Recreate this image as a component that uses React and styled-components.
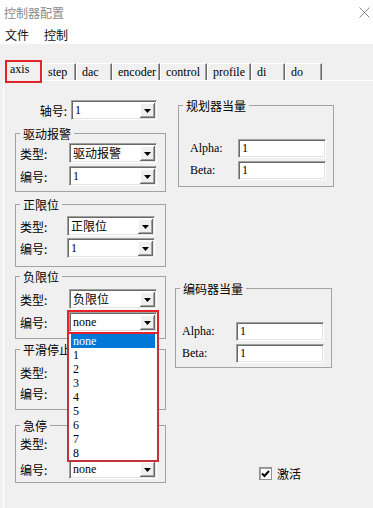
import styled, { createGlobalStyle } from "styled-components";

const CJK = `"Noto Sans CJK SC", "Noto Sans", sans-serif`;
const SERIF = `"Liberation Serif", "DejaVu Serif", serif`;

const GlobalStyle = createGlobalStyle`
    html, body {
        margin: 0;
        padding: 0;
    }
    body {
        width: 373px;
        height: 508px;
        overflow: hidden;
        background: #f0f0f0;
        font-family: ${CJK};
        font-size: 12px;
        color: #000;
    }
    * {
        box-sizing: border-box;
    }
`;

const Window = styled.div`
    width: 373px;
    height: 508px;
    display: flex;
    flex-direction: column;
    overflow: hidden;
`;

const TitleBar = styled.div`
    flex: none;
    height: 24px;
    display: flex;
    align-items: center;
    justify-content: space-between;
    padding: 0 3px 0 4px;
    background: #fff;
    color: #8a8a8a;
    font-size: 12px;
`;

const MenuBar = styled.div`
    flex: none;
    height: 20px;
    display: flex;
    align-items: center;
    gap: 15px;
    padding-left: 5px;
    background: #fff;
    color: #111;
    font-size: 12px;
`;

const TabStrip = styled.div`
    flex: none;
    height: 20px;
    margin-top: 16px;
    padding-left: 5px;
    display: flex;
    align-items: flex-start;
    position: relative;
    z-index: 1;
`;

const Tab = styled.div`
    flex: none;
    width: ${p => p.$w}px;
    height: ${p => (p.$active ? 23 : 17)}px;
    margin-top: ${p => (p.$active ? 0 : 3)}px;
    padding: ${p => (p.$active ? "1px 0 0 3px" : "2px 0 0 5px")};
    font-family: ${SERIF};
    font-size: 12px;
    line-height: 13px;
    background: #f0f0f0;
    border-top: 1px solid #fff;
    border-left: 1px solid #fff;
    border-right: 1px solid #696969;
    box-shadow: inset -1px 0 0 #a0a0a0;
    ${p => p.$active && `
        border: 2px solid #e3242b;
        box-shadow: none;
    `}
`;

const Panel = styled.div`
    flex: 1;
    display: flex;
    align-items: flex-start;
    margin-left: 3px;
    padding-left: 11px;
    border-top: 1px solid #fff;
    border-left: 1px solid #fff;
`;

const LeftColumn = styled.div`
    width: 151px;
    flex: none;
    display: flex;
    flex-direction: column;
`;

const RightColumn = styled.div`
    flex: none;
    margin-left: 9px;
    display: flex;
    flex-direction: column;
    align-items: flex-start;
`;

const AxisRow = styled.div`
    display: flex;
    align-items: center;
    height: 20px;
    margin-top: 19px;
`;

const AxisLabel = styled.span`
    width: 52px;
    margin-right: 4px;
    text-align: right;
    font-size: 12px;
`;

const Group = styled.fieldset`
    margin: ${p => p.$mt}px 0 0 ${p => p.$ml || 0}px;
    width: ${p => p.$w}px;
    min-width: 0;
    padding: ${p => p.$pt}px 0 ${p => p.$pb}px 4px;
    border: 1px solid #a3a3a3;
    --lw: ${p => p.$lw}px;
    --indent: ${p => p.$indent || 0}px;
`;

const Legend = styled.legend`
    padding: 0 3px;
    font-size: 12px;
    line-height: 15px;
`;

const Rows = styled.div`
    display: flex;
    flex-direction: column;
    gap: ${p => p.$gap}px;
`;

const Row = styled.div`
    display: flex;
    align-items: center;
    height: ${p => p.$h || 20}px;
    padding-left: var(--indent);
`;

const Label = styled.span`
    flex: none;
    width: var(--lw);
    font-family: ${p => (p.$serif ? SERIF : CJK)};
    font-size: 12px;
    white-space: nowrap;
`;

const SelectBox = styled.div`
    position: relative;
    flex: none;
    width: ${p => p.$w || 88}px;
    height: 20px;
    display: flex;
    padding: 1px 1px 1px 3px;
    background: #fff;
    border: 1px solid;
    border-color: #a0a0a0 #fff #fff #a0a0a0;
    box-shadow: inset 1px 1px 0 #696969, inset -1px -1px 0 #e3e3e3;
    ${p => p.$framed && `outline: 2px solid #e8222a;`}
`;

const SelectValue = styled.span`
    flex: 1;
    align-self: center;
    font-family: ${p => (p.$serif ? SERIF : CJK)};
    font-size: 12px;
    line-height: 16px;
    white-space: nowrap;
`;

const ArrowButton = styled.span`
    flex: none;
    width: 15px;
    margin-top: 1px;
    display: flex;
    align-items: center;
    justify-content: center;
    background: #f0f0f0;
    box-shadow: inset -1px -1px 0 #696969, inset 1px 1px 0 #fff, inset -2px -2px 0 #a0a0a0;
`;

const DropList = styled.ul`
    position: absolute;
    top: 21px;
    left: -3px;
    width: 92px;
    margin: 0;
    padding: 0 2px;
    list-style: none;
    background: #fff;
    border: 2px solid #c2323c;
    border-top: none;
    z-index: 10;
`;

const DropItem = styled.li`
    height: 14px;
    line-height: 14px;
    padding-left: 2px;
    font-family: ${SERIF};
    font-size: 12px;
    background: ${p => (p.$selected ? "#0078d7" : "transparent")};
    color: ${p => (p.$selected ? "#fff" : "#000")};
`;

const TextInput = styled.input`
    flex: none;
    width: 88px;
    height: 19px;
    margin: 0;
    padding: 0 0 0 3px;
    background: #fff;
    border: 1px solid;
    border-color: #a0a0a0 #fff #fff #a0a0a0;
    box-shadow: inset 1px 1px 0 #696969, inset -1px -1px 0 #e3e3e3;
    font-family: ${SERIF};
    font-size: 12px;
    color: #000;
    outline: none;
`;

const CheckRow = styled.label`
    display: flex;
    align-items: center;
    gap: 5px;
    margin: 97px 0 0 84px;
    font-size: 12px;
`;

const CheckBox = styled.span`
    width: 13px;
    height: 13px;
    display: flex;
    align-items: center;
    justify-content: center;
    background: #fff;
    border: 1px solid #8f8f8f;
    box-shadow: inset 1px 1px 0 #a0a0a0;
`;

const CloseIcon = () => (
    <svg width="11" height="11" viewBox="0 0 11 11">
        <path d="M0.5 0.5 L10.5 10.5 M10.5 0.5 L0.5 10.5" stroke="#8a8a8a" strokeWidth="1" fill="none" />
    </svg>
);

const Triangle = () => (
    <svg width="7" height="4" viewBox="0 0 7 4">
        <polygon points="0,0 7,0 3.5,4" fill="#000" />
    </svg>
);

const serifValue = v => /^[\w]+$/.test(v);

function Select({ value = "", width, framed, options }) {
    return (
        <SelectBox $w={width} $framed={framed}>
            <SelectValue $serif={serifValue(value)}>{value}</SelectValue>
            <ArrowButton><Triangle /></ArrowButton>
            {options && (
                <DropList>
                    {options.map(o => (
                        <DropItem key={o} $selected={o === value}>{o}</DropItem>
                    ))}
                </DropList>
            )}
        </SelectBox>
    );
}

const tabs = [
    { name: "axis", w: 37 },
    { name: "step", w: 34 },
    { name: "dac", w: 36 },
    { name: "encoder", w: 48 },
    { name: "control", w: 47 },
    { name: "profile", w: 44 },
    { name: "di", w: 34 },
    { name: "do", w: 37 },
];

const numberOptions = ["none", "1", "2", "3", "4", "5", "6", "7", "8"];

function App() {
    return (
        <Window>
            <GlobalStyle />
            <TitleBar>
                <span>控制器配置</span>
                <CloseIcon />
            </TitleBar>
            <MenuBar>
                <span>文件</span>
                <span>控制</span>
            </MenuBar>
            <TabStrip>
                {tabs.map((t, i) => (
                    <Tab key={t.name} $w={t.w} $active={i === 0}>{t.name}</Tab>
                ))}
            </TabStrip>
            <Panel>
                <LeftColumn>
                    <AxisRow>
                        <AxisLabel>轴号:</AxisLabel>
                        <Select value="1" width={86} />
                    </AxisRow>

                    <Group $mt={6} $pt={2} $pb={5} $lw={49}>
                        <Legend>驱动报警</Legend>
                        <Rows $gap={3}>
                            <Row><Label>类型:</Label><Select value="驱动报警" /></Row>
                            <Row><Label>编号:</Label><Select value="1" /></Row>
                        </Rows>
                    </Group>

                    <Group $mt={5} $pt={4} $pb={8} $lw={47}>
                        <Legend>正限位</Legend>
                        <Rows $gap={2}>
                            <Row><Label>类型:</Label><Select value="正限位" /></Row>
                            <Row><Label>编号:</Label><Select value="1" /></Row>
                        </Rows>
                    </Group>

                    <Group $mt={2} $pt={5} $pb={6} $lw={49}>
                        <Legend>负限位</Legend>
                        <Rows $gap={3}>
                            <Row><Label>类型:</Label><Select value="负限位" /></Row>
                            <Row>
                                <Label>编号:</Label>
                                <Select value="none" framed options={numberOptions} />
                            </Row>
                        </Rows>
                    </Group>

                    <Group $mt={3} $pt={5} $pb={6} $lw={49}>
                        <Legend>平滑停止</Legend>
                        <Rows $gap={1}>
                            <Row><Label>类型:</Label><Select /></Row>
                            <Row><Label>编号:</Label><Select /></Row>
                        </Rows>
                    </Group>

                    <Group $mt={8} $pt={0} $pb={3} $lw={49}>
                        <Legend>急停</Legend>
                        <Rows $gap={6}>
                            <Row><Label>类型:</Label><Select /></Row>
                            <Row><Label>编号:</Label><Select value="none" /></Row>
                        </Rows>
                    </Group>
                </LeftColumn>

                <RightColumn>
                    <Group $mt={17} $ml={3} $w={156} $pt={26} $pb={6} $lw={48} $indent={7}>
                        <Legend>规划器当量</Legend>
                        <Rows $gap={3}>
                            <Row $h={19}><Label $serif>Alpha:</Label><TextInput readOnly value="1" /></Row>
                            <Row $h={19}><Label $serif>Beta:</Label><TextInput readOnly value="1" /></Row>
                        </Rows>
                    </Group>

                    <Group $mt={94} $w={157} $pt={26} $pb={4} $lw={54} $indent={2}>
                        <Legend>编码器当量</Legend>
                        <Rows $gap={3}>
                            <Row $h={19}><Label $serif>Alpha:</Label><TextInput readOnly value="1" /></Row>
                            <Row $h={19}><Label $serif>Beta:</Label><TextInput readOnly value="1" /></Row>
                        </Rows>
                    </Group>

                    <CheckRow>
                        <CheckBox>
                            <svg width="9" height="8" viewBox="0 0 9 8">
                                <path d="M1 3.5 L3.5 6 L8 1" stroke="#000" strokeWidth="2" fill="none" />
                            </svg>
                        </CheckBox>
                        <span>激活</span>
                    </CheckRow>
                </RightColumn>
            </Panel>
        </Window>
    );
}

export default App;
